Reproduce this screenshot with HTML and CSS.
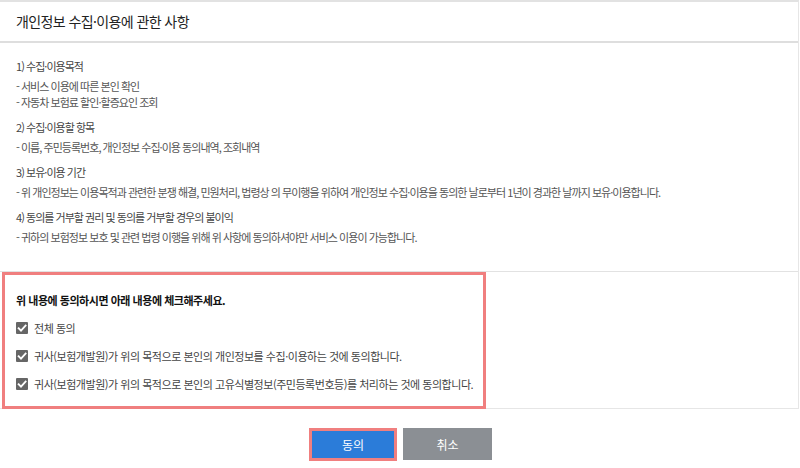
FILE: index.html
```html
<!DOCTYPE html>
<html lang="ko">
<head>
<meta charset="utf-8">
<title>개인정보 수집·이용에 관한 사항</title>
<link rel="stylesheet" href="styles.css">
</head>
<body>
<div class="panel">
  <div class="header">개인정보 수집·이용에 관한 사항</div>
  <div class="content">
    <div class="group">
      <div class="head">1) 수집·이용목적</div>
      <div class="sub">- 서비스 이용에 따른 본인 확인</div>
      <div class="sub">- 자동차 보험료 할인·할증요인 조회</div>
    </div>
    <div class="group">
      <div class="head">2) 수집·이용할 항목</div>
      <div class="sub">- 이름, 주민등록번호, 개인정보 수집·이용 동의내역, 조회내역</div>
    </div>
    <div class="group">
      <div class="head">3) 보유·이용 기간</div>
      <div class="sub">- 위 개인정보는 이용목적과 관련한 분쟁 해결, 민원처리, 법령상 의 무이행을 위하여 개인정보 수집·이용을 동의한 날로부터 1년이 경과한 날까지 보유·이용합니다.</div>
    </div>
    <div class="group">
      <div class="head">4) 동의를 거부할 권리 및 동의를 거부할 경우의 불이익</div>
      <div class="sub">- 귀하의 보험정보 보호 및 관련 법령 이행을 위해 위 사항에 동의하셔야만 서비스 이용이 가능합니다.</div>
    </div>
  </div>
  <div class="agree">
    <div class="agree-box">
      <div class="agree-title">위 내용에 동의하시면 아래 내용에 체크해주세요.</div>
      <label class="row"><span class="chk"><svg viewBox="0 0 12 12" width="12" height="12"><path d="M2.6 6.2 L5 8.6 L9.6 3.6" fill="none" stroke="#fff" stroke-width="1.8" stroke-linecap="square"/></svg></span>전체 동의</label>
      <label class="row"><span class="chk"><svg viewBox="0 0 12 12" width="12" height="12"><path d="M2.6 6.2 L5 8.6 L9.6 3.6" fill="none" stroke="#fff" stroke-width="1.8" stroke-linecap="square"/></svg></span>귀사(보험개발원)가 위의 목적으로 본인의 개인정보를 수집·이용하는 것에 동의합니다.</label>
      <label class="row"><span class="chk"><svg viewBox="0 0 12 12" width="12" height="12"><path d="M2.6 6.2 L5 8.6 L9.6 3.6" fill="none" stroke="#fff" stroke-width="1.8" stroke-linecap="square"/></svg></span>귀사(보험개발원)가 위의 목적으로 본인의 고유식별정보(주민등록번호등)를 처리하는 것에 동의합니다.</label>
    </div>
  </div>
</div>
<div class="buttons">
  <button class="btn btn-ok">동의</button>
  <button class="btn btn-cancel">취소</button>
</div>
</body>
</html>
```
FILE: styles.css
```css
* { box-sizing: border-box; }
html, body { margin: 0; padding: 0; background: #fff; }
body {
  font-family: "Noto Sans CJK KR", "Noto Sans", sans-serif;
  color: #444;
  width: 800px;
}
.panel {
  width: 799px;
  border-top: 2px solid #e2e2e2;
  border-right: 1px solid #e6e6e6;
  border-bottom: 1px solid #e6e6e6;
}
.header {
  height: 41px;
  line-height: 38px;
  padding-left: 16px;
  font-size: 14px;
  letter-spacing: -0.6px;
  color: #222;
  border-bottom: 2px solid #dedede;
}
.content {
  padding: 15px 16px 26px;
  font-size: 11px;
  letter-spacing: -0.97px;
}
.group { margin-bottom: 9px; }
.group:last-child { margin-bottom: 0; }
.head { line-height: 16px; margin-bottom: 4px; color: #444; }
.sub { line-height: 16px; color: #555; }
.agree {
  border-top: 1px solid #e2e2e2;
}
.agree-box {
  width: 484px;
  margin-left: 2px;
  margin-bottom: -1px;
  border: 3px solid #f07f7f;
  padding: 17px 2px 14px 11px;
  font-size: 11px;
  letter-spacing: -0.47px;
  white-space: nowrap;
}
.agree-title {
  line-height: 16px;
  font-weight: 700;
  color: #111;
}
.row {
  display: flex;
  align-items: center;
  line-height: 16px;
  margin-top: 12px;
  color: #444;
}
.chk {
  width: 12px;
  height: 12px;
  background: #666;
  border-radius: 1px;
  margin-right: 6px;
  flex: none;
  display: flex;
}
.buttons {
  display: flex;
  justify-content: center;
  gap: 6px;
  padding-top: 19px;
  padding-left: 1px;
}
.btn {
  font-family: "Noto Sans CJK KR", sans-serif;
  font-size: 12px;
  color: #fff;
  border: 0;
  padding: 0;
  margin: 0;
}
.btn-ok {
  width: 88px;
  height: 33px;
  background: #2b7cd9;
  border: 3px solid #f07f7f;
}
.btn-cancel {
  width: 89px;
  height: 32px;
  background: #8b8f94;
}
```
